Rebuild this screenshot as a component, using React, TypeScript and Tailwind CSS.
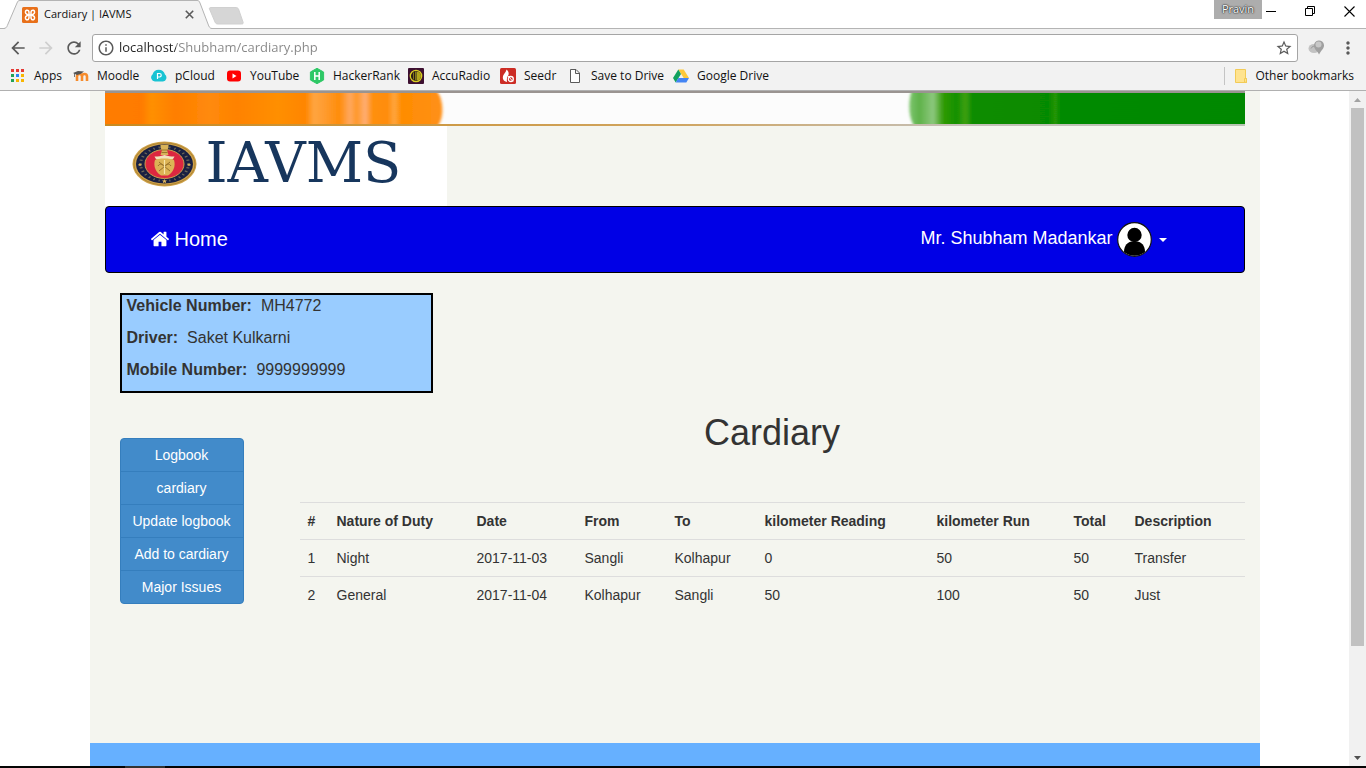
import type { ReactNode } from "react";
import {
  MdArrowBack,
  MdArrowForward,
  MdInfoOutline,
  MdMoreVert,
  MdRefresh,
  MdStarBorder,
} from "react-icons/md";

function XamppIcon() {
  return (
    <svg width="16" height="16" viewBox="0 0 16 16" aria-hidden="true">
      <rect width="16" height="16" rx="1.5" fill="#e8701a" />
      <path
        d="M4.500 3.300C3 4 3 6.500 4.800 7.200L6.500 8l-1.700.8C3 9.500 3 12 4.500 12.700 6 13.200 7 12 7 10.500V8h2v2.500c0 1.500 1 2.700 2.500 2.200 1.500-.7 1.500-3.200-.3-3.900L9.500 8l1.700-.8c1.800-.7 1.800-3.200.3-3.900C10 2.800 9 4 9 5.500V8H7V5.500C7 4 6 2.800 4.500 3.300z"
        fill="none"
        stroke="#fff"
        strokeWidth="1.500"
      />
    </svg>
  );
}

function AppsIcon() {
  const colors = ["#e53935", "#e53935", "#e53935", "#22a257", "#2a85f5", "#f8b500", "#22a257", "#f8b500", "#f8b500"];
  return (
    <svg width="16" height="16" viewBox="0 0 16 16" aria-hidden="true">
      {colors.map((c, i) => (
        <rect key={i} x={1 + (i % 3) * 5} y={1 + Math.floor(i / 3) * 5} width="3" height="3" fill={c} />
      ))}
    </svg>
  );
}

function MoodleIcon() {
  return (
    <svg width="16" height="16" viewBox="0 0 16 16" aria-hidden="true">
      <path d="M4 13V8.500a2.500 2.500 0 0 1 5 0V13M9 13V8.500a2.500 2.500 0 0 1 5 0V13" fill="none" stroke="#f68b2c" strokeWidth="2.600" />
      <path d="M0 5 5 3l6 .5-3 2.300-4 1.200z" fill="#555" />
      <path d="M1.500 5v4" stroke="#555" strokeWidth=".8" />
    </svg>
  );
}

function PCloudIcon() {
  return (
    <svg width="16" height="16" viewBox="0 0 16 16" aria-hidden="true">
      <path d="M4 13.500a4 4 0 0 1-2.500-7A6.500 6.500 0 0 1 14 6.500a4 4 0 0 1-2 7z" fill="#19c3d3" />
      <path d="M6.500 11V5.500h2a1.700 1.700 0 0 1 0 3.500h-2" fill="none" stroke="#fff" strokeWidth="1.200" />
    </svg>
  );
}

function YouTubeIcon() {
  return (
    <svg width="16" height="16" viewBox="0 0 16 16" aria-hidden="true">
      <rect x="1" y="2.500" width="14" height="11" rx="3" fill="#f00" />
      <path d="m6.500 5.500 4 2.500-4 2.500z" fill="#fff" />
    </svg>
  );
}

function HackerRankIcon() {
  return (
    <svg width="16" height="16" viewBox="0 0 16 16" aria-hidden="true">
      <path d="M8 .3 14.600 4v8L8 15.700 1.400 12V4z" fill="#2ec866" stroke="#2ec866" strokeLinejoin="round" />
      <path d="M5.800 4v8M10.200 4v8M5.800 8h4.400" stroke="#fff" strokeWidth="1.500" />
    </svg>
  );
}

function AccuRadioIcon() {
  return (
    <svg width="16" height="16" viewBox="0 0 16 16" aria-hidden="true">
      <rect width="16" height="16" rx="1" fill="#3c0f30" />
      <circle cx="8" cy="8" r="5.700" fill="#2a1a18" stroke="#d8cc22" strokeWidth="1.300" />
      <path d="M8.500 3.500a4.500 4.500 0 0 1 0 9z" fill="#b0a51c" />
      <path d="M7.500 3.500v9M5.500 4.500v7" stroke="#8b8319" strokeWidth=".9" />
    </svg>
  );
}

function SeedrIcon() {
  return (
    <svg width="16" height="16" viewBox="0 0 16 16" aria-hidden="true">
      <rect width="16" height="16" rx="1.500" fill="#cc2c24" />
      <path d="M7 14C3 13 2 10 3.500 7 4.500 5 6 4 6.500 1.500 8.500 3 9 5 8.500 7 7 9 6.500 11 7 14z" fill="#fff" />
      <circle cx="10.800" cy="11" r="2.500" fill="none" stroke="#fff" strokeWidth="1.300" />
      <path d="M8 8 13 13.500" stroke="#fff" strokeWidth="1" />
    </svg>
  );
}

function PageIcon() {
  return (
    <svg width="16" height="16" viewBox="0 0 16 16" aria-hidden="true">
      <path d="M3.500 1.500h5.500l3.500 3.500v9.500h-9zM8.500 1.500v4h4" fill="#fff" stroke="#5a5a5a" />
    </svg>
  );
}

function DriveIcon() {
  return (
    <svg width="16" height="16" viewBox="0 0 16 16" aria-hidden="true">
      <path d="M5.300 1.500h5.400L16 10h-5.300z" fill="#fdc83a" />
      <path d="M5.300 1.500 8 6 2.700 14.500 0 10z" fill="#11a15f" />
      <path d="M5.300 10H16l-2.700 4.500H2.700z" fill="#4485f4" />
    </svg>
  );
}

function FolderIcon() {
  return (
    <svg width="16" height="16" viewBox="0 0 16 16" aria-hidden="true">
      <path d="M2.500 1.500h10v9h1v4h-11z" fill="#ffe38f" stroke="#f2cb57" />
      <path d="M11.500 14v-3.500h2v4z" fill="#ffe38f" stroke="#f2cb57" />
    </svg>
  );
}

function HomeIcon() {
  return (
    <svg width="20" height="20" viewBox="0 0 1664 1792" aria-hidden="true" fill="currentColor">
      <path d="M1408 992v480q0 26-19 45t-45 19H960v-384H704v384H320q-26 0-45-19t-19-45V992q0-1 .5-3t.5-3l575-474 575 474q1 2 1 6zm223-69-62 74q-8 9-21 11h-3q-13 0-21-7L832 424 140 1001q-12 8-24 7-13-2-21-11l-62-74q-8-10-7-23.500T37 878l719-599q32-26 76-26t76 26l244 204V288q0-14 9-23t23-9h192q14 0 23 9t9 23v408l219 182q10 8 11 21.500t-7 23.500z" />
    </svg>
  );
}

const bookmarks: { label: string; icon: ReactNode }[] = [
  { label: "Apps", icon: <AppsIcon /> },
  { label: "Moodle", icon: <MoodleIcon /> },
  { label: "pCloud", icon: <PCloudIcon /> },
  { label: "YouTube", icon: <YouTubeIcon /> },
  { label: "HackerRank", icon: <HackerRankIcon /> },
  { label: "AccuRadio", icon: <AccuRadioIcon /> },
  { label: "Seedr", icon: <SeedrIcon /> },
  { label: "Save to Drive", icon: <PageIcon /> },
  { label: "Google Drive", icon: <DriveIcon /> },
];

function TabStrip() {
  return (
    <div className="flex h-7 shrink-0 items-start justify-between bg-white">
      <div className="flex items-start">
        <div className="relative h-[29px] w-[212px]">
          <svg className="absolute inset-0" width="212" height="29" viewBox="0 0 212 29" aria-hidden="true">
            <path d="M4 29C7 28 7 26 8 24L17 3C18 1 18 .5 20 .5H197C199 .5 199 1 200 3L208 24C209 27 210 28 212 29z" fill="#f2f2f2" />
            <path d="M0 28.500H4C7 28 7 26 8 24L17 3C18 1 18 .5 20 .5H197C199 .5 199 1 200 3L208 24C209 27 210 28.500 212 28.500" fill="none" stroke="#b4b4b4" />
          </svg>
          <div className="relative flex h-[29px] items-center gap-1.5 pr-3.5 pl-[22px]">
            <XamppIcon />
            <span className="flex-1 text-[11px]">Cardiary | IAVMS</span>
            <button aria-label="Close tab" className="p-1">
              <svg width="9" height="9" viewBox="0 0 9 9" aria-hidden="true">
                <path d="m.8.8 7.400 7.400M8.200.8.800 8.200" stroke="#5a5a5a" strokeWidth="1.600" />
              </svg>
            </button>
          </div>
        </div>
        <button aria-label="New tab" className="pt-[7px]">
          <svg className="-ml-1" width="36" height="18" viewBox="0 0 36 18" aria-hidden="true">
            <path d="M3 .5h25c1 0 2 .5 2.500 1.500L35 15c.5 1.500 0 2-1.500 2H10c-1.500 0-2.500-.5-3-2L1.500 2c-.4-1 .2-1.500 1.500-1.500z" fill="#d6d6d6" stroke="#d0d0d0" />
          </svg>
        </button>
      </div>
      <div className="flex items-start">
        <span className="h-[19px] w-12 bg-[#adadad] text-center text-[11px] leading-[18px] text-white [text-shadow:0_0_2px_#000,0_0_1px_#000]">
          Pravin
        </span>
        <div className="flex h-[22px] items-center gap-[29px] pr-[11px] pl-1">
          <button aria-label="Minimize">
            <svg width="10" height="10" viewBox="0 0 10 10" aria-hidden="true">
              <path d="M0 5.500h10" stroke="#000" />
            </svg>
          </button>
          <button aria-label="Restore">
            <svg width="10" height="10" viewBox="0 0 10 10" aria-hidden="true">
              <path d="M.5 2.500h7v7h-7zM2.500 2.500v-2h7v7h-2" fill="none" stroke="#000" />
            </svg>
          </button>
          <button aria-label="Close">
            <svg width="11" height="11" viewBox="0 0 11 11" aria-hidden="true">
              <path d="m.5.5 10 10M10.500.5l-10 10" stroke="#000" strokeWidth="1.100" />
            </svg>
          </button>
        </div>
      </div>
    </div>
  );
}

function Toolbar() {
  return (
    <div className="flex h-[34px] shrink-0 items-center border-t border-[#b4b4b4] bg-[#f2f2f2] pt-1 pr-2 pl-2 text-[#5a5a5a]">
      <button aria-label="Back"><MdArrowBack size={20} /></button>
      <button aria-label="Forward" className="ml-2 text-[#cfcfcf]"><MdArrowForward size={20} /></button>
      <button aria-label="Reload" className="ml-2"><MdRefresh size={20} /></button>
      <div className="ml-2 flex h-7 flex-1 items-center rounded-[3px] border border-[#a5a5a5] bg-white pr-1 pl-1">
        <MdInfoOutline size={18} />
        <input
          aria-label="Address"
          className="ml-1 min-w-0 flex-1 bg-[linear-gradient(90deg,#222_57px,#868686_57px)] bg-clip-text text-[13px] text-transparent outline-none"
          defaultValue="localhost/Shubham/cardiary.php"
        />
        <button aria-label="Bookmark this page"><MdStarBorder size={18} /></button>
      </div>
      <button aria-label="Extension" className="ml-2.5">
        <svg width="18" height="16" viewBox="0 0 18 16" aria-hidden="true">
          <ellipse cx="6" cy="8.500" rx="5.500" ry="4.500" fill="#c2c2c2" />
          <path d="M3 8.500c1-2 3-3 4-2" fill="none" stroke="#999" />
          <path d="M6 6a5 5 0 0 1 10-1c.4 3-2.500 5-5 9.500-1-3-4.500-4.500-5-8.500z" fill="#a0a0a0" />
          <circle cx="10.500" cy="4.500" r="3" fill="#c8c8c8" />
        </svg>
      </button>
      <button aria-label="Menu" className="ml-3"><MdMoreVert size={20} /></button>
    </div>
  );
}

function BookmarksBar() {
  return (
    <nav aria-label="Bookmarks" className="flex h-[29px] shrink-0 items-center justify-between border-b border-[#b0b0b0] bg-[#f2f2f2] pr-3 pl-2.5 text-[12px]">
      <div className="grid grid-cols-[63px_78px_75px_83px_99px_92px_67px_106px_auto] items-center">
        {bookmarks.map((b) => (
          <a key={b.label} href="#" className="flex items-center gap-2 whitespace-nowrap">
            {b.icon}
            <span>{b.label}</span>
          </a>
        ))}
      </div>
      <div className="flex items-center border-l border-[#c4c4c4] pl-2">
        <a href="#" className="flex items-center gap-1.5 whitespace-nowrap">
          <FolderIcon />
          <span>Other bookmarks</span>
        </a>
      </div>
    </nav>
  );
}

function Banner() {
  return (
    <svg className="block h-[35px] w-full" viewBox="0 0 1140 35" preserveAspectRatio="none" aria-hidden="true">
      <defs>
        <linearGradient id="saffron">
          <stop offset="0" stopColor="#ff7d00" />
          <stop offset=".12" stopColor="#ff7a00" />
          <stop offset=".15" stopColor="#ff9000" />
          <stop offset=".22" stopColor="#ff7e00" />
          <stop offset=".32" stopColor="#ff8a0a" />
          <stop offset=".4" stopColor="#ff8200" />
          <stop offset=".52" stopColor="#ff8f05" />
          <stop offset=".6" stopColor="#ff8500" />
          <stop offset=".625" stopColor="#ffa540" />
          <stop offset=".66" stopColor="#ff9a2c" />
          <stop offset=".7" stopColor="#ff8c08" />
          <stop offset=".73" stopColor="#ffa860" />
          <stop offset=".75" stopColor="#ff9828" />
          <stop offset=".775" stopColor="#ffae75" />
          <stop offset=".795" stopColor="#ff9010" />
          <stop offset=".84" stopColor="#ff8c08" />
          <stop offset=".86" stopColor="#ffa640" />
          <stop offset=".88" stopColor="#ff8c00" />
          <stop offset="1" stopColor="#ff9018" />
        </linearGradient>
        <linearGradient id="green">
          <stop offset="0" stopColor="#7cc46c" />
          <stop offset=".03" stopColor="#5fb24a" />
          <stop offset=".07" stopColor="#8dc87e" />
          <stop offset=".09" stopColor="#4fa82c" />
          <stop offset=".1" stopColor="#2f9a00" />
          <stop offset=".14" stopColor="#139000" />
          <stop offset=".165" stopColor="#3fa012" />
          <stop offset=".185" stopColor="#0a8c00" />
          <stop offset=".41" stopColor="#068a00" />
          <stop offset=".43" stopColor="#279608" />
          <stop offset=".44" stopColor="#068a00" />
          <stop offset="1" stopColor="#048800" />
        </linearGradient>
        <linearGradient id="edge">
          <stop offset="0" stopColor="#c98a20" />
          <stop offset=".5" stopColor="#d0a560" />
          <stop offset=".75" stopColor="#c4c0b8" />
          <stop offset="1" stopColor="#b9c4b4" />
        </linearGradient>
        <filter id="soft" x="-5%" y="-20%" width="110%" height="140%">
          <feGaussianBlur stdDeviation="1.500 0.600" />
        </filter>
      </defs>
      <rect width="1140" height="35" fill="#fcfcfc" />
      <path d="M-5 2H333C338 9 339 25 334 33H-5z" fill="url(#saffron)" filter="url(#soft)" />
      <path d="M806 2H1145V33H808C803 24 804 9 806 2z" fill="url(#green)" filter="url(#soft)" />
      <rect width="1140" height="2" fill="#9a9491" />
      <rect y="33" width="1140" height="2" fill="url(#edge)" />
    </svg>
  );
}

function Emblem() {
  const marks = Array.from({ length: 28 }, (_, i) => i * (360 / 28));
  return (
    <svg className="shrink-0" width="66" height="46" viewBox="0 0 66 46" aria-hidden="true">
      <ellipse cx="32.500" cy="23" rx="32" ry="22.500" fill="#cfa24a" />
      <ellipse cx="32.500" cy="23" rx="30.500" ry="21" fill="none" stroke="#a57c2c" strokeWidth=".8" />
      <ellipse cx="32.500" cy="23" rx="28.500" ry="19.500" fill="#192042" />
      {marks.map((a) => {
        const r = (a * Math.PI) / 180;
        const x = Math.cos(r);
        const y = Math.sin(r);
        return (
          <line
            key={a}
            x1={32.5 + x * 22.5}
            y1={23 + y * 16}
            x2={32.5 + x * 25.5}
            y2={23 + y * 18}
            stroke="#6f6a58"
            strokeWidth="1.200"
          />
        );
      })}
      <ellipse cx="32.500" cy="23" rx="19.500" ry="14.500" fill="#dc2740" stroke="#c9a04e" strokeWidth="1" />
      <path d="M28.500 4h8v3L35 9l1.500 5h-8L30 9l-1.500-2z" fill="#d8b35a" />
      <path d="M29.500 9h6M29.500 11.500h6" stroke="#8b6722" strokeWidth=".8" />
      <path d="M22.500 15.500c4 0 6-.5 10-1.500 4 1 6 1.500 10 1.500-1 3-3 3.500-5 3.500h-10c-2 0-4-.5-5-3.500z" fill="#f2e3bd" />
      <path d="M23 19c3-2 16-2 19 0 2 6-1 13-6 15.500h-7C24 32 21 25 23 19z" fill="#dcb455" />
      <path d="m27 21 11 9M38 21 27 30M26 25c2-3 4-2 6.500 0 2.500-2 4.500-3 6.500 0" fill="none" stroke="#96702a" strokeWidth="1" />
      <path d="M32.500 19v14" stroke="#f7e5a8" strokeWidth="1.200" />
      <path d="m32.500 38 .8 1.600h1.800l-1.400 1 .5 1.700-1.700-1-1.700 1 .5-1.700-1.400-1h1.800zM8 22l.7 1.200h1.400l-1 .8.4 1.300-1.500-.8-1.500.8.4-1.300-1-.8h1.400zM57 22l.7 1.200h1.400l-1 .8.4 1.300-1.500-.8-1.500.8.4-1.300-1-.8h1.400z" fill="#e0b75b" />
    </svg>
  );
}

function NavBar() {
  return (
    <nav className="mb-5 flex h-[67px] items-center justify-between rounded border border-black bg-[#0000e6] pr-[77px] pl-11 text-white">
      <a href="#" className="flex items-center gap-[5px] pb-0.5 text-[20px] leading-5">
        <HomeIcon />
        Home
      </a>
      <button className="flex items-center gap-1 text-[18px] leading-5">
        <span className="pb-1">Mr. Shubham Madankar</span>
        <svg width="35" height="35" viewBox="0 0 35 35" aria-hidden="true">
          <defs>
            <clipPath id="face"><circle cx="17.500" cy="17.500" r="16.300" /></clipPath>
          </defs>
          <circle cx="17.500" cy="17.500" r="16.800" fill="#fff" stroke="#111" strokeWidth="1.200" />
          <g clipPath="url(#face)">
            <circle cx="17.500" cy="13" r="7.200" />
            <path d="M7 35v-5c0-7 4-10 8-10.500h5c4 .5 8 3.500 8 10.500v5z" />
          </g>
        </svg>
        <svg className="ml-[3px]" width="8" height="4" viewBox="0 0 8 4" aria-hidden="true">
          <path d="M0 0h8L4 4z" fill="#fff" />
        </svg>
      </button>
    </nav>
  );
}

const details = [
  { term: "Vehicle Number:", value: "MH4772" },
  { term: "Driver:", value: "Saket Kulkarni" },
  { term: "Mobile Number:", value: "9999999999" },
];

const menu = ["Logbook", "cardiary", "Update logbook", "Add to cardiary", "Major Issues"];

const columns = ["#", "Nature of Duty", "Date", "From", "To", "kilometer Reading", "kilometer Run", "Total", "Description"];

const rows = [
  ["1", "Night", "2017-11-03", "Sangli", "Kolhapur", "0", "50", "50", "Transfer"],
  ["2", "General", "2017-11-04", "Kolhapur", "Sangli", "50", "100", "50", "Just"],
];

function DiaryTable() {
  return (
    <table className="w-full table-fixed border-collapse text-left text-[14px] leading-5">
      <colgroup>
        <col className="w-[29px]" />
        <col className="w-[140px]" />
        <col className="w-[108px]" />
        <col className="w-[90px]" />
        <col className="w-[90px]" />
        <col className="w-[172px]" />
        <col className="w-[137px]" />
        <col className="w-[61px]" />
        <col />
      </colgroup>
      <thead>
        <tr className="border-t border-[#ddd]">
          {columns.map((c) => (
            <th key={c} scope="col" className="p-2 font-bold whitespace-nowrap">{c}</th>
          ))}
        </tr>
      </thead>
      <tbody>
        {rows.map((row) => (
          <tr key={row[0]} className="border-t border-[#ddd]">
            {row.map((cell, i) => (
              <td key={i} className="p-2 whitespace-nowrap">{cell}</td>
            ))}
          </tr>
        ))}
      </tbody>
    </table>
  );
}

function ScrollBar() {
  return (
    <div className="flex w-[17px] shrink-0 flex-col items-center bg-[#f1f1f1]" aria-hidden="true">
      <div className="flex h-[17px] items-center">
        <svg width="7" height="4" viewBox="0 0 7 4"><path d="M3.500 0 7 4H0z" fill="#a3a3a3" /></svg>
      </div>
      <div className="w-[13px] grow-[538] bg-[#c1c1c1]" />
      <div className="grow-[103]" />
      <div className="flex h-[17px] items-center">
        <svg width="7" height="4" viewBox="0 0 7 4"><path d="M0 0h7L3.500 4z" fill="#505050" /></svg>
      </div>
    </div>
  );
}

export default function App() {
  return (
    <div className="flex h-screen flex-col overflow-hidden bg-white font-['Open_Sans',sans-serif] text-[#111]">
      <TabStrip />
      <Toolbar />
      <BookmarksBar />
      <div className="flex min-h-0 flex-1 font-['Liberation_Sans',Arial,sans-serif] text-[#333]">
        <div className="min-w-0 flex-1 overflow-hidden">
          <div className="mx-auto flex h-full max-w-[1170px] flex-col bg-[#f4f5ef]">
            <div className="flex-1 px-[15px]">
              <Banner />
              <header className="flex h-20 w-[342px] items-start gap-2 bg-white pt-[15px] pl-[27px]">
                <Emblem />
                <span className="font-['DejaVu_Serif',serif] text-[56px] leading-[44px] text-[#17365d]">IAVMS</span>
              </header>
              <NavBar />
              <div className="px-[15px]">
                <dl className="h-[100px] w-[313px] border-2 border-black bg-[#99ccff] pl-[5px] text-[16px] leading-[22px]">
                  {details.map((d) => (
                    <div key={d.term} className="mb-2.5 flex gap-[9px]">
                      <dt className="font-bold">{d.term}</dt>
                      <dd>{d.value}</dd>
                    </div>
                  ))}
                </dl>
              </div>
              <div className="flex gap-14 pl-[15px]">
                <aside className="w-[124px] shrink-0 pt-[45px]">
                  <div className="flex flex-col divide-y divide-[#357ebd] overflow-hidden rounded border border-[#357ebd] bg-[#428bca] text-center text-[14px] leading-8 text-white">
                    {menu.map((m) => (
                      <a key={m} href="#">{m}</a>
                    ))}
                  </div>
                </aside>
                <main className="min-w-0 flex-1 pt-5">
                  <h1 className="mb-[49px] text-center text-[36px] leading-10">Cardiary</h1>
                  <DiaryTable />
                </main>
              </div>
            </div>
            <footer className="h-[23px] shrink-0 bg-[#66b0ff]" />
          </div>
        </div>
        <ScrollBar />
      </div>
      <div className="flex h-0.5 shrink-0 bg-[#050505] pl-[125px]">
        <div className="w-10 bg-[#333]" />
      </div>
    </div>
  );
}
